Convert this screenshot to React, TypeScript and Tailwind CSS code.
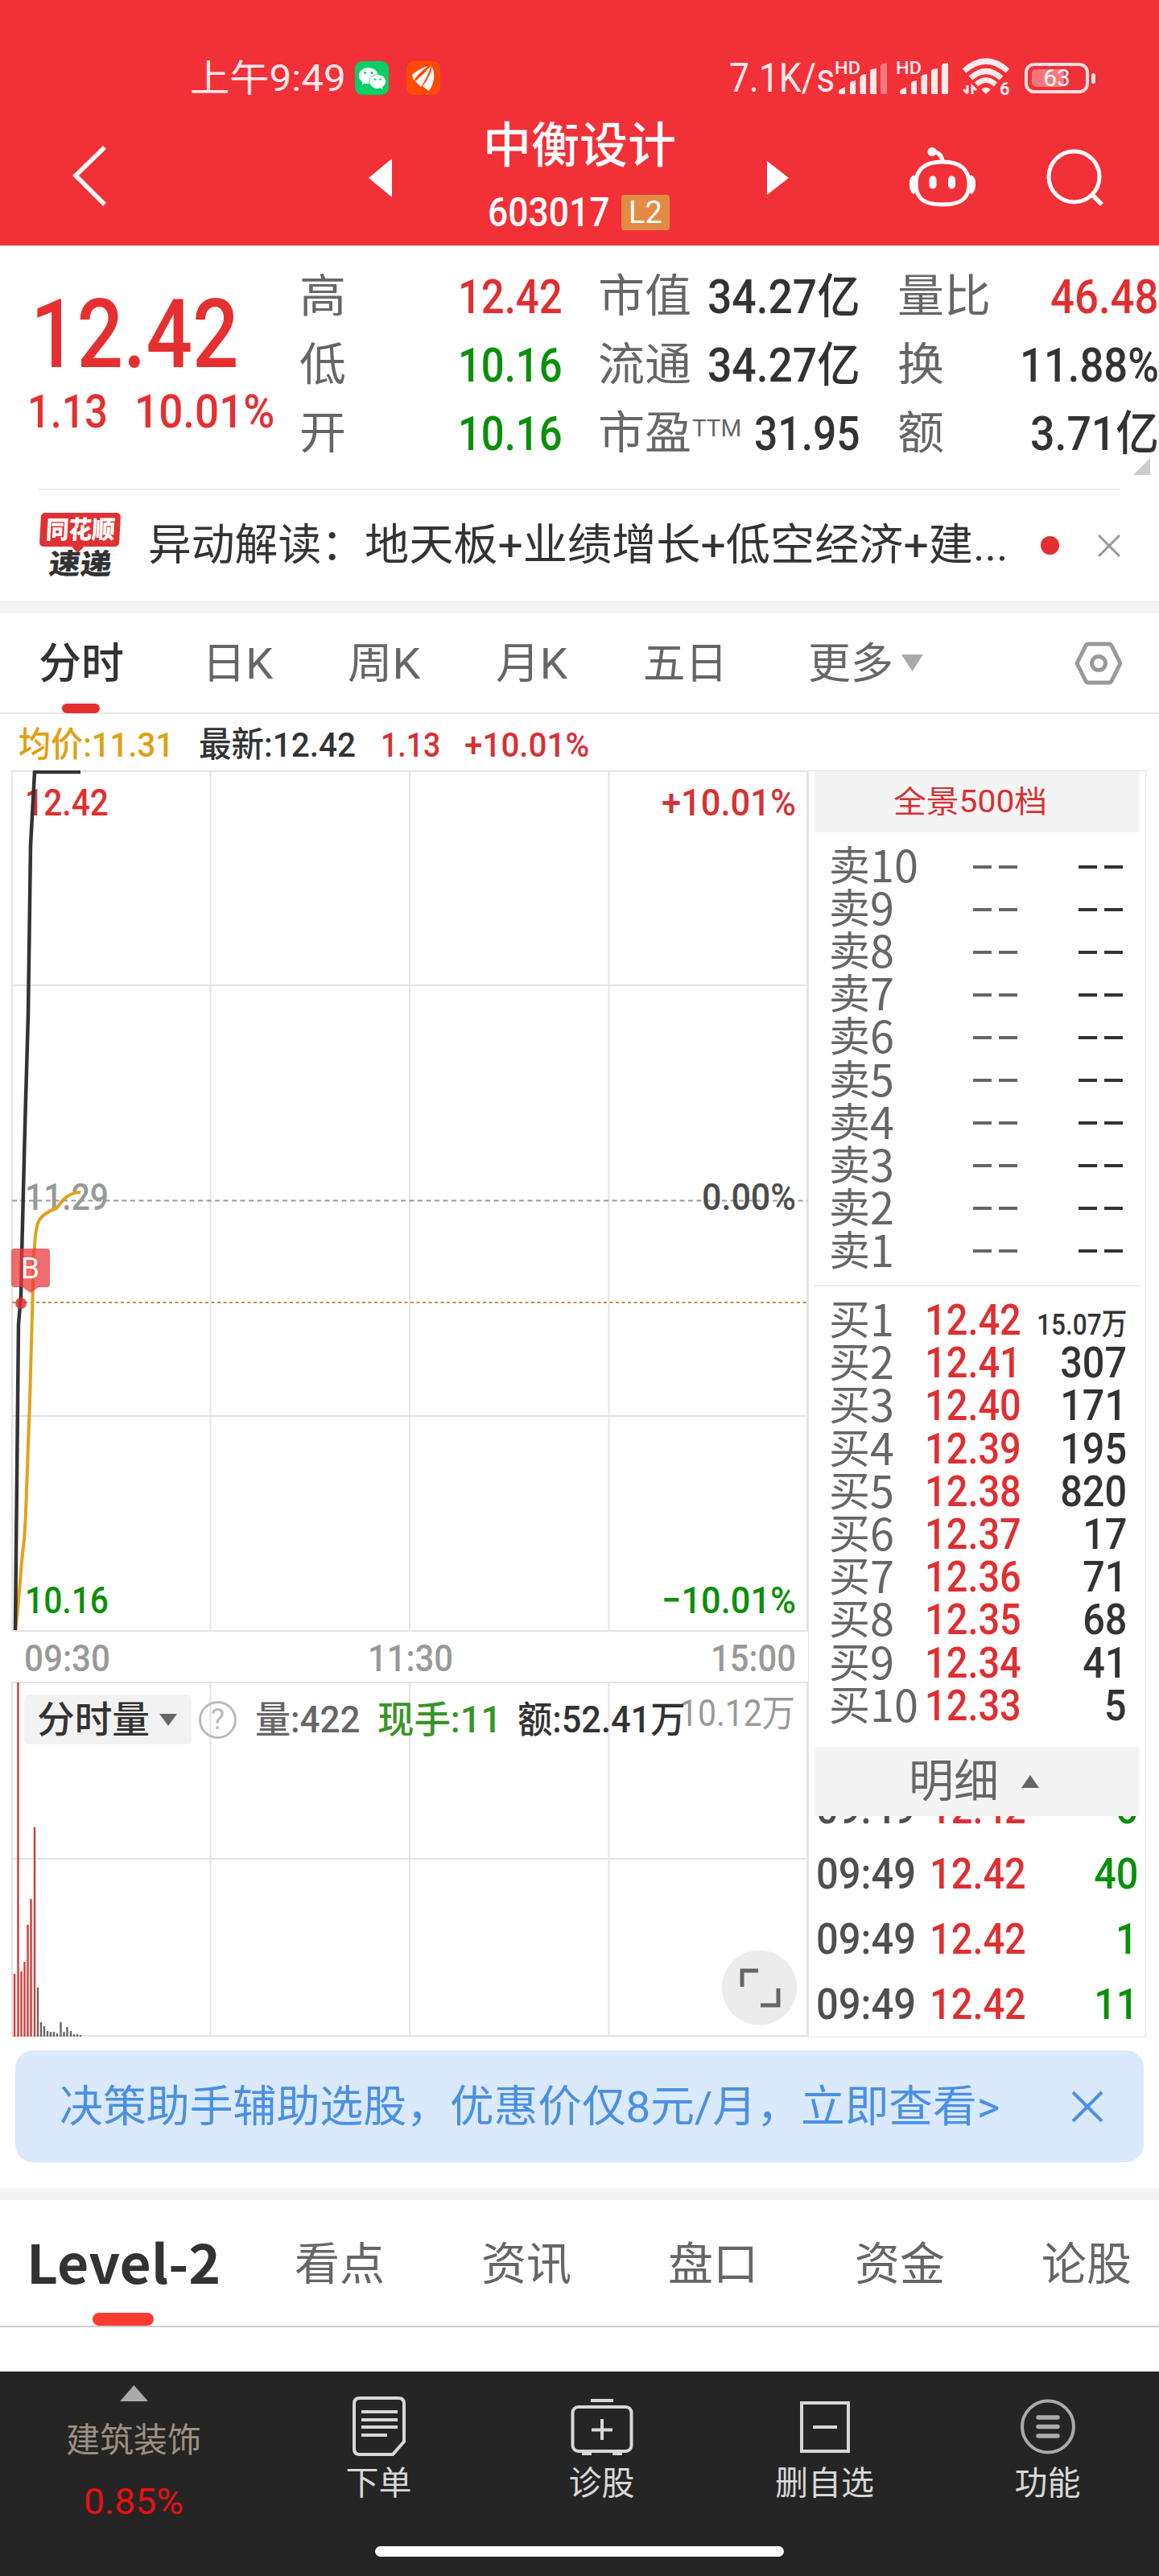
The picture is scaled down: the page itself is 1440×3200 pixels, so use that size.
import { ReactNode, useLayoutEffect, useRef } from "react";
import clsx from "clsx";
import { FaWeixin } from "react-icons/fa";

// Stretches or squeezes its text so that it fills the width of the box
const FitText = ({
  className,
  children,
}: {
  className?: string;
  children: ReactNode;
}) => {
  const box = useRef<HTMLSpanElement>(null);
  const text = useRef<HTMLSpanElement>(null);

  useLayoutEffect(() => {
    if (!box.current || !text.current) return;
    const scale = box.current.offsetWidth / text.current.offsetWidth;
    text.current.style.transform = `scaleX(${scale})`;
  }, [children]);

  return (
    <span
      ref={box}
      className={clsx("inline-flex shrink-0 whitespace-nowrap", className)}
    >
      <span ref={text} className="inline-block shrink-0 origin-left">
        {children}
      </span>
    </span>
  );
};

const SignalIcon = ({ weak }: { weak?: boolean }) => (
  <svg width="64" height="46" viewBox="0 0 64 46" fill="#ffe9ea" className="overflow-visible">
    <path d="M1 40 Q1 38 3 37 L9 34 V43 H3 Q1 43 1 41Z" />
    <path d="M15 30 Q15 28 17 27 L22 26 V43 H17 Q15 43 15 41Z" />
    <path d="M27.500 22 Q28 20 30 19 L35 18 V43 H29.500 Q27.500 43 27.500 41Z" />
    <path d="M40 15 Q40 13 42 12 L48 11 V43 H42 Q40 43 40 41Z" />
    <path
      d="M53 8 Q53 6 55 5 L61 4 V41 Q61 43 59 43 H55 Q53 43 53 41Z"
      opacity={weak ? 0.4 : 1}
    />
    <text x="-4" y="18" fontSize="22" fontWeight="500" textLength="32" lengthAdjust="spacingAndGlyphs">
      HD
    </text>
  </svg>
);

const WifiIcon = () => (
  <svg width="62" height="48" viewBox="0 0 62 48" fill="none" stroke="#ffe9ea" className="overflow-visible">
    <path d="M3 15 Q30 -9 57 15" strokeWidth="7" strokeLinecap="butt" />
    <path d="M11 24 Q30 7 49 24" strokeWidth="7" strokeLinecap="butt" />
    <path d="M18 32 Q30 21 42 32" strokeWidth="6.500" strokeLinecap="butt" />
    <path d="M24 38 Q30 33 36 38 L30 44Z" fill="#ffe9ea" stroke="none" />
    <path d="M7 33 V43 M2 38 L7 43 M13 44 V34 L18 39" strokeWidth="3" />
    <text x="47" y="45" fontSize="22" fontWeight="700" fill="#ffe9ea" stroke="none">
      6
    </text>
  </svg>
);

const RobotIcon = () => (
  <svg width="82" height="76" viewBox="0 0 82 76" fill="none" stroke="#fff" strokeWidth="5">
    <circle cx="28" cy="6.500" r="5.500" fill="#fff" stroke="none" />
    <path d="M29 6 Q41 8 41 20" />
    <path d="M41 19 C62 19 74 28 74 46 C74 65 64 72 41 72 C18 72 8 65 8 46 C8 28 20 19 41 19Z" />
    <path d="M7 38 Q2 40 3 48 Q3 54 7 57 M75 38 Q80 40 79 48 Q79 54 75 57" strokeWidth="6" />
    <path d="M29 41 V48 M52.500 41 V48" strokeWidth="9" strokeLinecap="round" />
  </svg>
);

const StatusBar = () => (
  <div className="flex h-[54px] items-center pl-[236px] text-[#ffe9ea]">
    <FitText className="w-[194px] text-[46px] leading-[54px]">上午9:49</FitText>
    <div className="ml-[11px] flex size-[42px] items-center justify-center rounded-[9px] bg-[#06cf67] text-white">
      <FaWeixin size={35} />
    </div>
    <div className="ml-[22px] flex size-[42px] items-center justify-center rounded-[9px] bg-[#fe4a05]">
      <svg width="30" height="32" viewBox="0 0 30 32" fill="#fff">
        <path d="M1 12 Q10 4 21 1 Q9 10 3 19Z" />
        <path d="M5 20 Q16 11 25 0 Q20 15 12 27Z" />
        <path d="M14 26 Q24 14 26 2 Q32 17 22 32Z" />
      </svg>
    </div>
    <FitText className="ml-[359px] w-[131px] text-[50px] leading-[54px]">7.1K/s</FitText>
    <div className="ml-[4px] flex items-center">
      <SignalIcon weak />
      <div className="ml-[12px]">
        <SignalIcon />
      </div>
      <div className="ml-[14px]">
        <WifiIcon />
      </div>
    </div>
    <div className="relative ml-[16px] flex h-[38px] w-[80px] items-center justify-center rounded-[12px] border-4 border-[#ffe0e1]">
      <div className="absolute top-[4px] left-[5px] h-[22px] w-[40px] rounded-[5px] bg-[#f9777c]" />
      <span className="relative text-[30px] leading-none text-white">63</span>
    </div>
    <div className="ml-[3px] h-[13px] w-[5px] rounded-sm bg-[#ffe0e1]" />
  </div>
);

const Header = () => (
  <header className="h-[305px] bg-[#f23038] pt-[70px] text-white">
    <StatusBar />
    <div className="flex h-[181px] items-start">
      <svg className="mt-[57px] ml-[89px]" width="44" height="76" viewBox="0 0 44 76" fill="none" stroke="#fff" strokeWidth="5.500">
        <path d="M41 2 L5 37 L41 73" />
      </svg>
      <svg className="mt-[73px] ml-[325px]" width="29" height="48" viewBox="0 0 29 48" fill="#fff">
        <path d="M29 0 V48 L0 24Z" />
      </svg>
      <div className="mt-[22px] ml-[113px] flex w-[240px] flex-col">
        <FitText className="h-[72px] w-[240px] text-[60px] leading-[72px] font-medium">中衡设计</FitText>
        <div className="mt-[14px] flex h-[64px] items-center pl-[6px]">
          <FitText className="w-[152px] text-[50px] font-medium">603017</FitText>
          <div className="ml-[14px] flex h-[44px] w-[60px] items-center justify-center rounded-[4px] bg-[#e38b45] text-[38px] leading-none">
            L2
          </div>
        </div>
      </div>
      <svg className="mt-[76px] ml-[113px]" width="27" height="42" viewBox="0 0 27 42" fill="#fff">
        <path d="M0 0 V42 L27 21Z" />
      </svg>
      <div className="mt-[58px] ml-[150px]">
        <RobotIcon />
      </div>
      <svg className="mt-[61px] ml-[88px]" width="72" height="72" viewBox="0 0 72 72" fill="none" stroke="#fff" strokeWidth="5">
        <circle cx="34.500" cy="34.500" r="31.500" />
        <path d="M56 56 L69 69" strokeWidth="5.500" />
      </svg>
    </div>
  </header>
);

const quoteRows = [
  {
    left: ["高", "12.42", "text-[#e02f31]"],
    mid: ["市值", "34.27亿", "w-[190px]"],
    right: ["量比", "46.48", "w-[135px] text-[#e02f31]"],
  },
  {
    left: ["低", "10.16", "text-[#0a9009]"],
    mid: ["流通", "34.27亿", "w-[190px]"],
    right: ["换", "11.88%", "w-[173px] text-[#333]"],
  },
  {
    left: ["开", "10.16", "text-[#0a9009]"],
    mid: ["市盈", "31.95", "w-[132px]"],
    right: ["额", "3.71亿", "w-[160px] text-[#333]"],
  },
];

const Quote = () => (
  <section className="relative flex h-[302px] pt-[21px]">
    <div className="w-[372px] shrink-0 text-[#e62f30]">
      <FitText className="mt-[38px] ml-[38px] h-[104px] w-[259px] text-[119px] leading-[104px] font-medium">
        12.42
      </FitText>
      <div className="mt-[14px] flex h-[60px] text-[57px] leading-[60px] font-medium">
        <FitText className="ml-[34px] w-[100px]">1.13</FitText>
        <FitText className="ml-[33px] w-[174px]">10.01%</FitText>
      </div>
    </div>
    <div className="w-[1068px] shrink-0">
      {quoteRows.map(({ left, mid, right }) => (
        <div key={left[0]} className="flex h-[85px] items-center text-[56px] leading-[85px] text-[#333]">
          <FitText className="w-[58px] text-[#666]">{left[0]}</FitText>
          <FitText className={clsx("ml-[139px] w-[130px] text-[59px] font-medium", left[2])}>{left[1]}</FitText>
          <span className="ml-[44px] flex text-[#666]">
            <FitText className="w-[116px]">{mid[0]}</FitText>
            {mid[0] === "市盈" && <FitText className="ml-[1px] w-[61px] text-[30px] leading-[72px]">TTM</FitText>}
          </span>
          <span className="ml-auto flex justify-end">
            <FitText className={clsx("text-[59px] font-medium", mid[2])}>{mid[1]}</FitText>
          </span>
          <span className="ml-[46px] flex w-[325px] shrink-0 justify-between">
            <FitText className={clsx("text-[#666]", right[0].length === 2 ? "w-[116px]" : "w-[58px]")}>
              {right[0]}
            </FitText>
            <FitText className={clsx("text-[59px] font-medium", right[2])}>{right[1]}</FitText>
          </span>
        </div>
      ))}
    </div>
    <svg className="absolute top-[264px] left-[1408px]" width="22" height="22" viewBox="0 0 22 22" fill="#ccc">
      <path d="M21 0 V21 H0Z" />
    </svg>
  </section>
);

const NewsBar = () => (
  <section className="h-[139px]">
    <div className="mx-[48px] h-[2px] bg-[#ececec]" />
    <div className="flex h-[137px] items-center pl-[48px]">
      <div className="flex w-[103px] flex-col items-center">
        <div className="relative flex h-[42px] w-[99px] -skew-x-3 items-center justify-center rounded-[5px] bg-[#e03034]">
          <FitText className="w-[86px] text-[31px] leading-none font-black text-white">同花顺</FitText>
          <div className="absolute top-[38px] left-[43px] size-[10px] rotate-45 bg-[#e03034]" />
        </div>
        <FitText className="mt-[5px] h-[35px] w-[78px] -skew-x-6 text-[35px] leading-[35px] font-black text-[#333]">
          速递
        </FitText>
      </div>
      <div className="ml-[33px] flex w-[1069px] items-center text-[54px] text-[#333]">
        <FitText className="w-[269px]">异动解读：</FitText>
        <FitText className="w-[800px]">地天板+业绩增长+低空经济+建...</FitText>
      </div>
      <div className="ml-[40px] size-[23px] rounded-full bg-[#e52e2f]" />
      <svg className="ml-[48px]" width="28" height="28" viewBox="0 0 28 28" stroke="#999" strokeWidth="3">
        <path d="M1 1 L27 27 M27 1 L1 27" />
      </svg>
    </div>
  </section>
);

const periods = [
  ["分时", "ml-[48px] w-[106px] font-medium text-[#333]"],
  ["日K", "ml-[97px] w-[88px]"],
  ["周K", "ml-[93px] w-[90px]"],
  ["月K", "ml-[94px] w-[89px]"],
  ["五日", "ml-[94px] w-[105px]"],
  ["更多", "ml-[100px] w-[106px]"],
];

const PeriodTabs = () => (
  <nav className="relative flex h-[125px] items-center border-b-2 border-[#e6e6e6] text-[53px] leading-none text-[#666]">
    <div className="flex pt-[4px]">
      {periods.map(([name, style]) => (
        <FitText key={name} className={style}>{name}</FitText>
      ))}
    </div>
    <svg className="ml-[10px]" width="28" height="21" viewBox="0 0 28 21" fill="#aaa">
      <path d="M0 0 H27 L13.500 21Z" />
    </svg>
    <svg className="ml-[188px]" width="58" height="54" viewBox="0 0 58 54" fill="none" stroke="#999" strokeWidth="5">
      <path d="M16 3 H42 Q44 3 45 5 L55 25 Q56 27 55 29 L45 49 Q44 51 42 51 H16 Q14 51 13 49 L3 29 Q2 27 3 25 L13 5 Q14 3 16 3Z" />
      <circle cx="29" cy="27" r="8.500" />
    </svg>
    <div className="absolute top-[112px] left-[77px] h-[12px] w-[47px] rounded-[6px] bg-[#e52e2f]" />
  </nav>
);

const ChartSummary = () => (
  <div className="flex h-[68px] items-center pt-[7px] text-[43px] leading-[60px] font-medium">
    <FitText className="ml-[23px] w-[193px] text-[#e0a010]">均价:11.31</FitText>
    <FitText className="ml-[31px] w-[195px] text-[#333]">最新:12.42</FitText>
    <FitText className="ml-[31px] w-[74px] text-[#d93033]">1.13</FitText>
    <FitText className="ml-[30px] w-[155px] text-[#d93033]">+10.01%</FitText>
  </div>
);

const volumeBars = [
  [18, 78], [22.5, 440], [26.5, 81], [30.5, 93], [34.5, 139],
  [38.5, 171], [43, 260], [47, 61], [51, 18], [55, 13], [59, 7],
  [63, 6], [67, 6], [71, 4], [75.5, 18], [79.5, 6], [83.5, 12],
  [88, 7], [92, 3], [96, 3], [100, 2],
];

// Drawn in page units; the first row of the box is at 957
const TrendChart = () => (
  <svg width="1004" height="1576" viewBox="0 957 1004 1576" className="block shrink-0 font-medium">
    <g stroke="#e3e3e3" strokeWidth="2" fill="none">
      <path d="M15 958 H1003 V2026 H15Z M15 1224 H1003 M15 1759 H1003" />
      <path d="M261.500 958 V2026 M509 958 V2026 M756.500 958 V2026" />
      <path d="M15 2090 H1003 V2529 H15Z M15 2309 H1003" />
      <path d="M261.500 2090 V2529 M509 2090 V2529 M756.500 2090 V2529" />
    </g>
    <path d="M15 1491.500 H1003" stroke="#999" strokeWidth="2" strokeDasharray="6 4.500" />
    <path d="M15 1618 H1003" stroke="#b8934a" strokeWidth="2" strokeDasharray="4 3.500" />

    <g fontSize="47">
      <text x="31" y="1013" fill="#e02f31" textLength="104" lengthAdjust="spacingAndGlyphs">12.42</text>
      <text x="822" y="1013" fill="#d93033" textLength="167" lengthAdjust="spacingAndGlyphs">+10.01%</text>
      <text x="31" y="1503" fill="#999" textLength="104" lengthAdjust="spacingAndGlyphs">11.29</text>
      <text x="872" y="1503" fill="#4c4c4c" textLength="117" lengthAdjust="spacingAndGlyphs">0.00%</text>
      <text x="31" y="2004" fill="#0a9009" textLength="104" lengthAdjust="spacingAndGlyphs">10.16</text>
      <text x="822" y="2004" fill="#0a9009" textLength="167" lengthAdjust="spacingAndGlyphs">−10.01%</text>
    </g>
    <g fontSize="47" fill="#999">
      <text x="30" y="2076" textLength="107" lengthAdjust="spacingAndGlyphs">09:30</text>
      <text x="457" y="2076" textLength="106" lengthAdjust="spacingAndGlyphs">11:30</text>
      <text x="883" y="2076" textLength="106" lengthAdjust="spacingAndGlyphs">15:00</text>
    </g>

    <path
      d="M19 2025 C23 1995 24 1975 27 1940 Q31 1910 32 1880 L37 1740 L42 1560 L44 1535 Q46 1518 50 1514 Q56 1506 70 1501 L78 1491 Q88 1481 100 1481"
      stroke="#e3a11c"
      strokeWidth="4"
      fill="none"
    />
    <path
      d="M19 2025 L23 1645 L26 1610 L27 1560 L31 1400 L35 1260 L38 1050 L43 959 H100"
      stroke="#333"
      strokeWidth="4.500"
      fill="none"
    />
    <circle cx="26" cy="1619" r="7" fill="#e02f31" fillOpacity="0.850" />
    <path
      d="M18 1551 H58 Q62 1551 62 1555 V1595 Q62 1599 58 1599 H48 L38 1606 L28 1599 H18 Q14 1599 14 1595 V1555 Q14 1551 18 1551Z"
      fill="#ea3a3c"
      fillOpacity="0.750"
    />
    <text x="26" y="1588" fontSize="37" fontWeight="400" fill="#fff">B</text>

    {volumeBars.map(([x, h], i) => (
      <rect key={x} x={x - 1.2} y={2530 - h} width="2.400" height={h} fill={i < 7 ? "#d23a38" : "#666"} />
    ))}

    <circle cx="943.500" cy="2469" r="46.500" fill="#ececec" />
    <path d="M922 2468 V2448 H942 M967 2470 V2491 H945" stroke="#666" strokeWidth="5" fill="none" />
  </svg>
);

const VolumeBar = () => (
  <div className="absolute top-[1148px] left-[30px] flex h-[62px] items-center text-[46px] leading-[64px] font-medium">
    <div className="flex h-[62px] w-[208px] items-center rounded-[6px] bg-[#f2f2f2] text-[#333]">
      <FitText className="ml-[16px] w-[140px]">分时量</FitText>
      <svg className="ml-[12px]" width="22" height="15" viewBox="0 0 22 15" fill="#666">
        <path d="M0 0 H22 L11 15Z" />
      </svg>
    </div>
    <div className="ml-[9px] flex size-[47px] items-center justify-center rounded-full border-[3px] border-[#bbb] text-[36px] leading-none font-normal text-[#bbb]">
      ?
    </div>
    <FitText className="ml-[23px] w-[131px] text-[#666]">量:422</FitText>
    <FitText className="ml-[21px] w-[154px] text-[#3a9427]">现手:11</FitText>
    <div className="relative z-10 ml-[20px] flex">
      <FitText className="w-[209px] text-[#333]">额:52.41万</FitText>
    </div>
    <FitText className="-mt-[16px] -ml-[8px] w-[144px] font-normal text-[#999]">10.12万</FitText>
  </div>
);

const sells = [10, 9, 8, 7, 6, 5, 4, 3, 2, 1];
const buys = [
  ["12.42", "15.07万"],
  ["12.41", "307"],
  ["12.40", "171"],
  ["12.39", "195"],
  ["12.38", "820"],
  ["12.37", "17"],
  ["12.36", "71"],
  ["12.35", "68"],
  ["12.34", "41"],
  ["12.33", "5"],
];
const ticks = [
  ["09:49", "12.42", "6"],
  ["09:49", "12.42", "40"],
  ["09:49", "12.42", "1"],
  ["09:49", "12.42", "11"],
];

const Dashes = ({ className }: { className: string }) => (
  <span className={clsx("flex gap-[9px]", className)}>
    <i className="h-[4px] w-[23px] bg-current" />
    <i className="h-[4px] w-[23px] bg-current" />
  </span>
);

const OrderBook = () => (
  <aside className="h-[1574px] w-[420px] border border-[#e6e6e6] px-[7px]">
    <div className="flex h-[76px] items-center bg-[#f4f4f4] pl-[98px]">
      <FitText className="w-[191px] text-[38px] leading-none text-[#d93033]">全景500档</FitText>
    </div>
    <div className="h-[564px] border-b-2 border-[#ececec] pt-[16px] pl-[18px] text-[#666]">
      {sells.map((level) => (
        <div key={level} className="flex h-[53.100px] items-center">
          <span className="-mt-[8px] flex w-[178px] font-['Noto_Sans_CJK_SC'] text-[51px] leading-[53px]">
            卖<span className="text-[54px]">{level}</span>
          </span>
          <Dashes className="ml-[1px]" />
          <Dashes className="ml-[76px] text-[#333]" />
        </div>
      ))}
    </div>
    <div className="h-[572px] pt-[15px] pr-[16px] pl-[18px] text-[#333]">
      {buys.map(([price, amount], i) => (
        <div key={price} className="flex h-[53.200px] items-center text-[54px] leading-[53px] font-medium">
          <span className="-mt-[6px] flex w-[119px] font-['Noto_Sans_CJK_SC'] text-[51px] font-normal text-[#666]">
            买<span className="text-[54px]">{i + 1}</span>
          </span>
          <FitText className="w-[120px] text-[#e02f31]">{price}</FitText>
          {i === 0 ? (
            <FitText className="mt-[12px] ml-auto w-[112px] text-[37px]">{amount}</FitText>
          ) : (
            <span className="ml-auto origin-right scale-x-90">{amount}</span>
          )}
        </div>
      ))}
    </div>
    <div className="flex h-[86px] items-center bg-[#f4f4f4] pl-[117px] text-[56px] leading-none text-[#666]">
      明细
      <svg className="ml-[28px]" width="22" height="16" viewBox="0 0 22 16" fill="#666">
        <path d="M0 16 H22 L11 0Z" />
      </svg>
    </div>
    <div className="h-[272px] overflow-hidden">
      <div className="-mt-[50px] pr-[2px] pl-[2px]">
        {ticks.map(([time, price, amount], i) => (
          <div key={i} className="flex h-[81px] items-center text-[54px] leading-[81px] font-medium">
            <FitText className="w-[124px] text-[#4f4f4f]">{time}</FitText>
            <FitText className="ml-[17px] w-[120px] text-[#e02f31]">{price}</FitText>
            <span className="ml-auto origin-right scale-x-90 text-[#0a9009]">{amount}</span>
          </div>
        ))}
      </div>
    </div>
  </aside>
);

const Banner = () => (
  <div className="mx-[19px] mt-[14px] flex h-[139px] items-center rounded-[22px] bg-[#dae9fb] pl-[55px] text-[54px] leading-none text-[#4a90e2]">
    <FitText className="mt-[2px] w-[485px]">决策助手辅助选股，</FitText>
    <FitText className="mt-[2px] w-[436px]">优惠价仅8元/月，</FitText>
    <FitText className="mt-[2px] w-[247px]">立即查看&gt;</FitText>
    <svg className="ml-[89px]" width="40" height="40" viewBox="0 0 40 40" stroke="currentColor" strokeWidth="4">
      <path d="M2 2 L38 38 M38 2 L2 38" />
    </svg>
  </div>
);

const sections = ["看点", "资讯", "盘口", "资金", "论股"];

const SectionTabs = () => (
  <nav className="relative flex h-[158px] items-center border-b-2 border-[#ccc] text-[56px] leading-none text-[#666]">
    <FitText className="-mt-[6px] ml-[33px] w-[241px] font-['Noto_Sans_CJK_SC'] text-[66px] font-bold text-[#333]">
      Level-2
    </FitText>
    <div className="mt-[3px] ml-[92px] flex gap-[120px]">
      {sections.map((name) => (
        <span key={name} className="w-[112px] shrink-0">{name}</span>
      ))}
    </div>
    <div className="absolute top-[140px] left-[115px] h-[16px] w-[76px] rounded-[8px] bg-[#fa3c30]" />
  </nav>
);

const actions = [
  {
    name: "下单",
    icon: (
      <>
        <path d="M11 4 H59 Q66 4 66 11 V58 L52 74 H11 Q4 74 4 67 V11 Q4 4 11 4Z" />
        <path d="M13 21 H58 M13 31 H58 M13 40 H58 M13 50 H45" />
      </>
    ),
  },
  {
    name: "诊股",
    icon: (
      <>
        <rect x="-1.500" y="15" width="73" height="55" rx="7" />
        <path d="M21 7 H49 M35 30 V56 M22 43.500 H48 M10 73 H22 M48 73 H60" />
      </>
    ),
  },
  {
    name: "删自选",
    icon: <path d="M6 10 H64 V70 H6Z M20 40 H50" />,
  },
  {
    name: "功能",
    icon: (
      <g stroke="#aaa">
        <circle cx="35" cy="39.500" r="32" />
        <path d="M23 28 H47 M23 39.500 H47 M23 51 H47" strokeWidth="5.500" strokeLinecap="round" />
      </g>
    ),
  },
];

const BottomNav = () => (
  <footer className="relative flex h-[254px] bg-[#252525] text-[#d8d8d8]">
    <div className="flex w-[332px] flex-col items-center">
      <svg className="mt-[17px]" width="35" height="20" viewBox="0 0 35 20" fill="#aaa">
        <path d="M0 20 H35 L17.500 0Z" />
      </svg>
      <span className="mt-[28px] text-[42px] leading-[42px] text-[#9c9080]">建筑装饰</span>
      <FitText className="mt-[32px] w-[124px] text-[44px] leading-[46px] text-[#e81010]">0.85%</FitText>
    </div>
    {actions.map(({ name, icon }) => (
      <div key={name} className="flex w-[277px] flex-col items-center">
        <svg className="mt-[29px] overflow-visible" width="70" height="78" viewBox="0 0 70 78" fill="none" stroke="#d8d8d8" strokeWidth="4">
          {icon}
        </svg>
        <span className="mt-[12px] text-[41px] leading-[41px]">{name}</span>
      </div>
    ))}
    <div className="absolute top-[217px] left-[466px] h-[13px] w-[508px] rounded-full bg-white" />
  </footer>
);

export default function App() {
  return (
    <div lang="zh-CN" className="h-[3200px] w-[1440px] overflow-hidden bg-white font-[Roboto,'Noto_Sans_CJK_SC',sans-serif]">
      <Header />
      <Quote />
      <NewsBar />
      <div className="h-[16px] bg-[#f4f4f4]" />
      <PeriodTabs />
      <ChartSummary />
      <main className="relative mt-[2px] flex h-[1576px]">
        <TrendChart />
        <OrderBook />
        <VolumeBar />
      </main>
      <Banner />
      <div className="mt-[32px] h-[15px] bg-[#f4f4f4]" />
      <SectionTabs />
      <div className="h-[55px]" />
      <BottomNav />
    </div>
  );
}
